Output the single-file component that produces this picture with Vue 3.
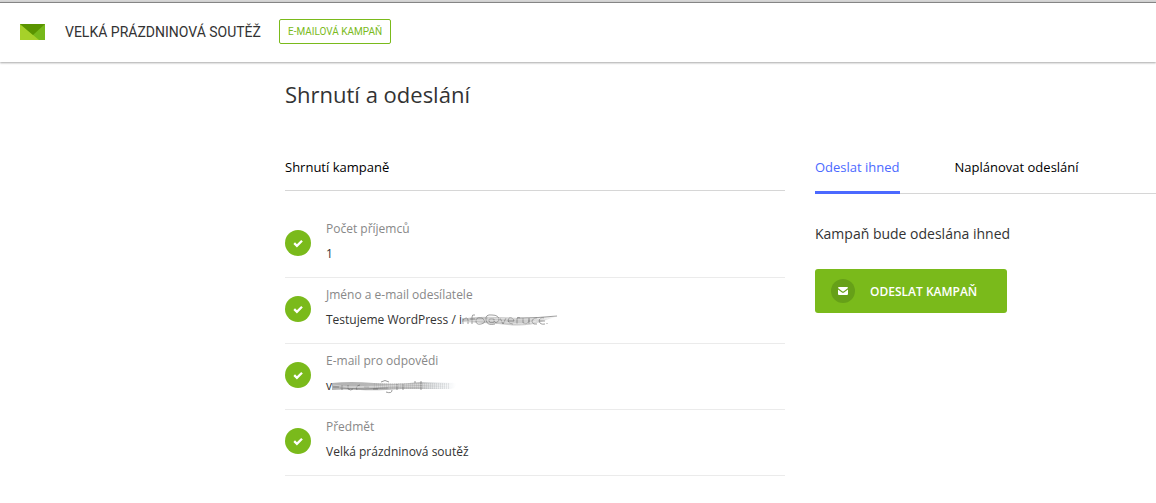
<script setup>
import { ref } from 'vue'

const tab = ref('now')

const items = [
  { label: 'Počet příjemců', value: '1' },
  { label: 'Jméno a e-mail odesílatele', value: 'Testujeme WordPress / i', smudge: 'sender' },
  { label: 'E-mail pro odpovědi', value: 'v', smudge: 'reply' },
  { label: 'Předmět', value: 'Velká prázdninová soutěž' },
]
</script>

<template>
  <div class="page">
    <header class="topbar">
      <svg class="logo" viewBox="0 0 25 16" aria-hidden="true">
        <path d="M0 0h25v16H0z" fill="#76b81a" />
        <path d="M0 0l19 16H0z" fill="#a6d129" />
        <path d="M0 0h25L13 11z" fill="#5a9400" />
      </svg>
      <span class="campaign">VELKÁ PRÁZDNINOVÁ SOUTĚŽ</span>
      <span class="badge">E-MAILOVÁ KAMPAŇ</span>
    </header>

    <main class="content">
      <h1>Shrnutí a odeslání</h1>
      <div class="columns">
        <section class="summary">
          <h2>Shrnutí kampaně</h2>
          <ul class="items">
            <li v-for="item in items" :key="item.label" class="item">
              <svg class="check" viewBox="0 0 26 26" aria-hidden="true">
                <circle cx="13" cy="13" r="13" fill="#7aba1b" />
                <path d="M9.2 13.2l2.7 2.6 5.1-5.1" fill="none" stroke="#fff" stroke-width="2.3" />
              </svg>
              <div class="texts">
                <div class="label">{{ item.label }}</div>
                <div class="value">
                  <span>{{ item.value }}</span>
                  <svg v-if="item.smudge === 'sender'" class="smudge" viewBox="0 0 98 16" aria-hidden="true">
                    <defs>
                      <linearGradient id="fadeSender" x1="0" x2="1">
                        <stop offset="0" stop-color="#999" stop-opacity=".55" />
                        <stop offset=".6" stop-color="#aaa" stop-opacity=".6" />
                        <stop offset="1" stop-color="#777" stop-opacity="0" />
                      </linearGradient>
                      <filter id="softSender"><feGaussianBlur stdDeviation=".5" /></filter>
                    </defs>
                    <g filter="url(#softSender)">
                      <path d="M0 7Q14 4 35 5T70 6L97 4Q86 7 79 10Q64 15 46 13T0 10z" fill="url(#fadeSender)" />
                      <path d="M1 6v6M1 8q4-4 5 0v4M10 12V5q0-3 3-2M8 7h5M19 6q-5-1-5 3t5 3 3-4-3-2M33 12q-8 2-9-4t6-5q7 0 7 5-3 5-5 1V7q-6-1-5 2t5 1M38 6l3 6 3-6M46 9h6q-1-4-5-3-3 5 4 6M55 12V6q2-1 3 0M61 6v5q3 2 6-1V6v6M75 6q-5 0-5 4 1 3 5 2M83 9h-6q1-4 5-3M77 9q1 4 6 3M85 11v1" fill="none" stroke="#777" stroke-opacity=".7" />
                      <path d="M1 10q24-4 42 0t31-1M26 6q35 2 60 0" fill="none" stroke="#fff" stroke-opacity=".4" />
                      <path d="M55 6q22 0 40-2" fill="none" stroke="#666" stroke-opacity=".6" />
                    </g>
                  </svg>
                  <svg v-if="item.smudge === 'reply'" class="smudge reply" viewBox="0 0 126 16" aria-hidden="true">
                    <defs>
                      <linearGradient id="fadeReply" x1="0" x2="1">
                        <stop offset="0" stop-color="#888" stop-opacity=".65" />
                        <stop offset=".7" stop-color="#aaa" stop-opacity=".75" />
                        <stop offset="1" stop-color="#b8c7d2" stop-opacity="0" />
                      </linearGradient>
                      <filter id="softReply"><feGaussianBlur stdDeviation=".5" /></filter>
                    </defs>
                    <g filter="url(#softReply)">
                      <path d="M0 5Q18 3 42 5T88 4L124 5Q126 11 115 11H70Q45 13 28 12T0 12z" fill="url(#fadeReply)" />
                      <path d="M1 9h6M10 12V7M16 7v4q3 2 5 0M28 7q-5 1-3 5M32 9h5M41 11h5M49 4q4-3 8 0M54 14q6 2 6-2M65 6v6M71 6v6M83 3v2M89 3v9" fill="none" stroke="#666" stroke-opacity=".65" />
                      <path d="M1 7q25 4 55 1t64 0M8 10q43-4 108 0" fill="none" stroke="#fff" stroke-opacity=".35" />
                      <path d="M8 10q24 2 48 0" fill="none" stroke="#666" stroke-opacity=".5" />
                    </g>
                    <path d="M42 8h76" fill="none" stroke="#777" stroke-opacity=".15" stroke-width="6" stroke-dasharray="1 1" />
                  </svg>
                </div>
              </div>
            </li>
          </ul>
        </section>

        <section class="send">
          <nav class="tabs">
            <button type="button" :class="{ active: tab === 'now' }" @click="tab = 'now'">Odeslat ihned</button>
            <button type="button" :class="{ active: tab === 'later' }" @click="tab = 'later'">Naplánovat odeslání</button>
          </nav>
          <p>Kampaň bude odeslána ihned</p>
          <button type="button" class="submit">
            <svg viewBox="0 0 24 24" aria-hidden="true">
              <circle cx="12" cy="12" r="12" fill="#66a018" />
              <path d="M8 8h8q1 0 1 1l-4.2 3.2q-.8.6-1.6 0L7 9q0-1 1-1z" fill="#fff" />
              <path d="M7 10.4l3.6 2.8q1.4 1 2.8 0l3.6-2.8V15q0 1-1 1H8q-1 0-1-1z" fill="#fff" />
            </svg>
            <span>ODESLAT KAMPAŇ</span>
          </button>
        </section>
      </div>
    </main>
  </div>
</template>

<style>
body {
  background: #fff;
}
</style>

<style scoped>
.page {
  font-family: "Open Sans", "Noto Sans", sans-serif;
  color: #333;
  border-top: 2px solid #d6d6d6;
}
.topbar {
  display: flex;
  align-items: center;
  height: 60px;
  box-sizing: border-box;
  padding: 0 20px 2px;
  border-top: 1px solid #858585;
  box-shadow: 0 1px 2px rgba(0, 0, 0, 0.35);
  font-family: Roboto, sans-serif;
}
.logo {
  width: 25px;
  height: 16px;
  margin-right: 20px;
}
.campaign {
  font-size: 14px;
  line-height: 20px;
  white-space: nowrap;
}
.badge {
  margin-left: 18px;
  padding: 0 8px;
  border: 1px solid #7aba1b;
  border-radius: 2px;
  color: #7aba1b;
  font-size: 10px;
  line-height: 23px;
  white-space: nowrap;
}
.content {
  padding: 16px 0 26px 285px;
}
h1 {
  margin: 0;
  font-size: 22px;
  font-weight: 400;
  line-height: 32px;
}
.columns {
  display: flex;
  gap: 30px;
  margin-top: 47px;
}
.summary {
  flex: 0 1 500px;
}
h2 {
  margin: 0;
  padding-bottom: 13px;
  border-bottom: 1px solid #d6d6d6;
  color: #000;
  font-size: 13px;
  font-weight: 400;
  line-height: 20px;
}
.items {
  list-style: none;
  margin: 21px 0 0;
  padding: 0;
}
.item {
  display: flex;
  align-items: center;
  gap: 15px;
  padding: 8px 0 11px;
  border-bottom: 1px solid #ebebeb;
  font-size: 12px;
}
.check {
  flex: none;
  width: 26px;
  height: 26px;
}
.label {
  color: #888;
  line-height: 18px;
}
.value {
  display: flex;
  align-items: center;
  margin-top: 4px;
  line-height: 18px;
  height: 24px;
}
.value span {
  white-space: pre;
}
.smudge {
  flex: none;
  width: 98px;
  height: 16px;
}
.smudge.reply {
  width: 126px;
}
.send {
  flex: 1;
  min-width: 0;
}
.tabs {
  display: flex;
  gap: 55px;
  border-bottom: 1px solid #d6d6d6;
}
.tabs button {
  margin: 0 0 -1px;
  padding: 0 0 14px;
  border: 0;
  border-bottom: 3px solid transparent;
  background: none;
  color: #000;
  font: inherit;
  font-size: 13px;
  line-height: 20px;
  white-space: nowrap;
  cursor: pointer;
}
.tabs .active {
  border-color: #4b69ff;
  color: #4b69ff;
}
p {
  margin: 30px 0 25px;
  font-size: 14px;
  line-height: 20px;
}
.submit {
  display: flex;
  align-items: center;
  gap: 15px;
  height: 44px;
  padding: 0 30px 0 16px;
  border: 0;
  border-radius: 3px;
  background: #7aba1b;
  color: #fff;
  font: inherit;
  font-size: 12px;
  font-weight: 600;
  white-space: nowrap;
  cursor: pointer;
}
.submit svg {
  width: 24px;
  height: 24px;
}
</style>
